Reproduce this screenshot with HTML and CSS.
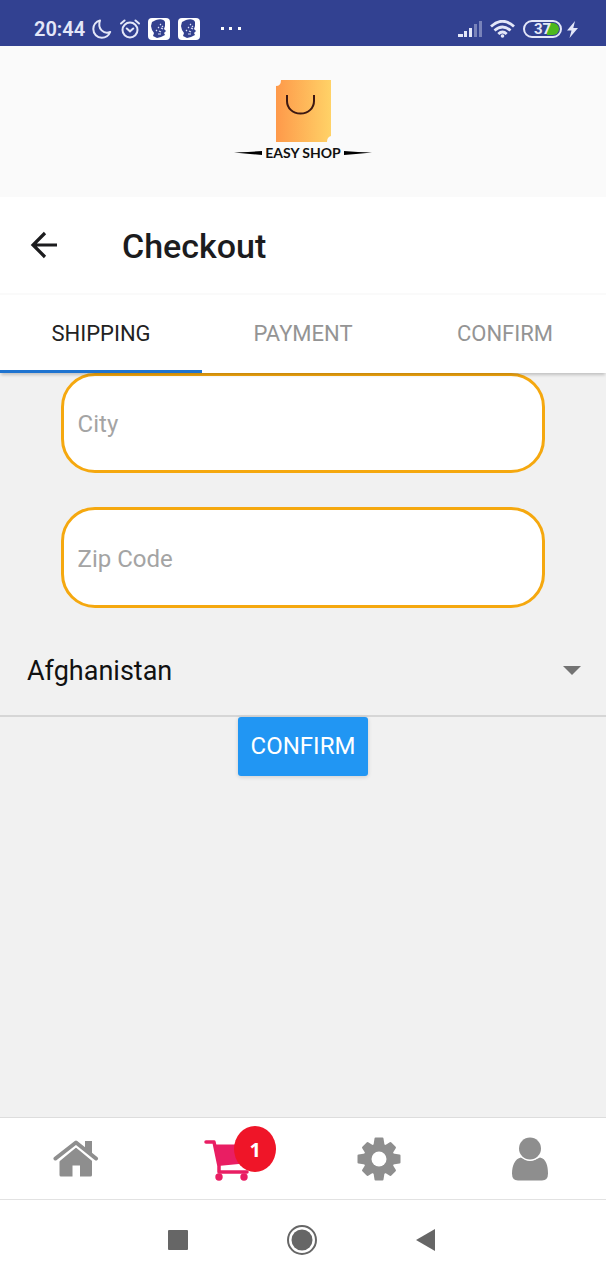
FILE: index.html
```html
<!DOCTYPE html>
<html lang="en">
<head>
<meta charset="utf-8">
<meta name="viewport" content="width=device-width, initial-scale=1">
<title>Easy Shop - Checkout</title>
<link rel="stylesheet" href="styles.css">
</head>
<body>
<div class="app">
  <div class="status">
    <span class="status-time">20:44</span>
    <svg width="20" height="20" viewBox="0 0 20 20" fill="none" stroke="currentColor" stroke-width="2" stroke-linejoin="round"><path d="M8 1.500C4 2.500 1.300 6 1.300 10c0 5 3.800 8.700 8.500 8.700 3.800 0 7-2.200 8.400-5.700C12 15.500 5 10 8 1.500z"/></svg>
    <svg width="20" height="20" viewBox="0 0 20 20" fill="none" stroke="currentColor" stroke-width="2" stroke-linecap="round"><circle cx="10" cy="11" r="7.500"/><path d="M1 4.500 4.500 1.500M19 4.500 15.500 1.500M6.800 9.500 10 12.300l3.200-2.800"/></svg>
    <svg width="22" height="22" viewBox="0 0 22 22"><rect width="22" height="22" rx="4" fill="#fff"/><path d="M8 2c4-1.500 8-1 9 2v4l-1 3 2 2-2 2 1 2-4 2-4 1-4-2 1-3-2-3-1-4 1-4z" fill="#34418f"/><path d="m12 6 1 1m-3 3 1-1m2 1 2 1m-4 2 2 1m1-6 1 1m-5 7h3m-5-4 1 1" stroke="#dfe3f8" stroke-width="1.200"/></svg>
    <svg width="22" height="22" viewBox="0 0 22 22"><rect width="22" height="22" rx="4" fill="#fff"/><path d="M8 2c4-1.500 8-1 9 2v4l-1 3 2 2-2 2 1 2-4 2-4 1-4-2 1-3-2-3-1-4 1-4z" fill="#34418f"/><path d="m12 6 1 1m-3 3 1-1m2 1 2 1m-4 2 2 1m1-6 1 1m-5 7h3m-5-4 1 1" stroke="#dfe3f8" stroke-width="1.200"/></svg>
    <svg class="dots" width="22" height="4" viewBox="0 0 22 4" fill="#fff"><path d="M1 0h3v3H1zM9 0h3v3H9zM18 0h3v3h-3z"/></svg>
    <div class="status-right">
      <svg width="24" height="18" viewBox="0 0 24 18" fill="currentColor"><path d="M0 14h5v3H0zM6 11h3v6H6zM11 8h3v9h-3z"/><path opacity=".4" d="M16 4h3v13h-3zM21 1h3v16h-3z"/></svg>
      <svg width="25" height="18" viewBox="0 0 25 18" fill="none" stroke="currentColor" stroke-width="2.800"><path d="M1 6.500q11.500-10.500 23 0M4.500 10.500q8-7 16 0M8.300 14q4.200-4 8.400 0"/><circle cx="12.500" cy="16" r="1.800" fill="currentColor" stroke="none"/></svg>
      <span class="battery">37</span>
      <svg class="bolt" width="11" height="17" viewBox="0 0 11 17" fill="currentColor"><path d="M8 0 0 9.500h4.500L2.500 17 11 7H6.300z"/></svg>
    </div>
  </div>

  <header class="brand">
    <svg width="56" height="63" viewBox="0 0 56 63">
      <defs><linearGradient id="bag" x1="0" x2="1"><stop offset="0" stop-color="#fe994a"/><stop offset="1" stop-color="#ffd267"/></linearGradient></defs>
      <path d="M6 0h50v56q-4 1-4 6H1V6q5 0 5-6z" fill="url(#bag)"/>
      <path d="M12 15v6c0 7 5.500 12.500 13.500 12.500S39 28 39 21v-6" fill="none" stroke="#3d1812" stroke-width="2"/>
    </svg>
    <div class="brand-name">
      <svg width="28" height="6" viewBox="0 0 28 6"><path d="M0 2.500 14 2l14-1v4l-12-1z"/></svg>
      <span>EASY SHOP</span>
      <svg width="28" height="6" viewBox="0 0 28 6"><path d="M28 2.500 14 2 0 1v4l12-1z"/></svg>
    </div>
  </header>

  <div class="title-bar">
    <button class="back" type="button" aria-label="Back"><svg width="28" height="28" viewBox="0 0 28 28" fill="none" stroke="currentColor" stroke-width="3.200"><path d="M27 14H3M15 2 3 14l12 12"/></svg></button>
    <h1>Checkout</h1>
  </div>

  <nav class="tabs">
    <button class="tab tab-active" type="button">SHIPPING</button>
    <button class="tab" type="button">PAYMENT</button>
    <button class="tab" type="button">CONFIRM</button>
  </nav>

  <main class="content">
    <form class="form">
      <input class="field" type="text" placeholder="City" aria-label="City">
      <input class="field" type="text" placeholder="Zip Code" aria-label="Zip Code">
      <div class="country">
        <select aria-label="Country"><option>Afghanistan</option></select>
        <svg width="18" height="9" viewBox="0 0 18 9"><path d="M0 0h18L9 9z" fill="#737373"/></svg>
      </div>
      <button class="confirm" type="button">CONFIRM</button>
    </form>
  </main>

  <nav class="bottom-nav">
    <a href="#home" aria-label="Home"><svg width="46" height="44" viewBox="0 0 46 44" fill="#8e8e8e"><path d="M23 10 39 22v16q0 1.500-1.500 1.500H27V28.500h-7.500v11H8q-1.500 0-1.500-1.500V22z"/><path d="M2.500 23 23 6l20.500 17" fill="none" stroke="#fff" stroke-width="7"/><path d="M32 4h7v15l-7-6z"/><path d="M2.500 21.500 23 5.500 43 21.500" fill="none" stroke="#8e8e8e" stroke-width="4" stroke-linecap="round" stroke-linejoin="round"/></svg></a>
    <a href="#cart" class="cart" aria-label="Cart, 1 item"><svg width="46" height="44" viewBox="0 0 46 44" fill="#e91e63"><path d="M2 5h8l5 24v6h28" fill="none" stroke="#e91e63" stroke-width="3.500" stroke-linejoin="round" stroke-linecap="round"/><path d="M10 7.500h34l-4 19L14 29z"/><circle cx="15" cy="40" r="3.700"/><circle cx="40" cy="40" r="3.700"/></svg><span class="badge">1</span></a>
    <a href="#settings" aria-label="Settings"><svg width="44" height="44" viewBox="0 0 44 44"><g fill="#8e8e8e"><circle cx="22" cy="22" r="15.500"/><path id="tooth" d="M18.500.5h7q.9 0 1 1L27.500 8v28l-1 6.500q-.1 1-1 1h-7q-.9 0-1-1L16.500 36V8l1-6.500q.1-1 1-1z"/><use href="#tooth" transform="rotate(90 22 22)"/><path id="diag" d="M19 1.500h6q1 0 1.200 1L27.500 8v28l-1.300 5.500q-.2 1-1.200 1h-6q-1 0-1.200-1L16.500 36V8l1.300-5.500q.2-1 1.200-1z" transform="rotate(45 22 22)"/><use href="#diag" transform="rotate(90 22 22)"/></g><circle cx="22" cy="22" r="7.500" fill="#fff"/></svg></a>
    <a href="#profile" aria-label="Profile"><svg width="38" height="44" viewBox="0 0 38 44" fill="#8e8e8e"><path d="M10 20.500q9 6 19 0c6 1 8 8 8 16q0 7-6 7H7q-6 0-6-7c0-8 3-15 9-16z"/><circle cx="19" cy="11.500" r="12.500" fill="#fff"/><circle cx="19" cy="11.500" r="11"/></svg></a>
  </nav>

  <div class="system-nav">
    <button type="button" aria-label="Recent apps"><svg width="20" height="20" viewBox="0 0 20 20"><rect width="20" height="20" rx="1" fill="#666"/></svg></button>
    <button type="button" aria-label="Home screen"><svg width="30" height="30" viewBox="0 0 30 30"><circle cx="15" cy="15" r="14" fill="none" stroke="#666" stroke-width="2"/><circle cx="15" cy="15" r="10.500" fill="#666"/></svg></button>
    <button type="button" aria-label="System back"><svg width="20" height="22" viewBox="0 0 20 22"><path d="M19 0v22L0 11z" fill="#666"/></svg></button>
  </div>
</div>
</body>
</html>
```

FILE: styles.css
```css
* { box-sizing: border-box; }

body {
  margin: 0;
  font-family: Roboto, "Noto Sans", sans-serif;
  background: #fff;
}

svg { display: block; flex: none; }

button {
  padding: 0;
  border: 0;
  background: none;
  font: inherit;
  color: inherit;
}

.app {
  display: flex;
  flex-direction: column;
  min-height: 100vh;
}

.status {
  display: flex;
  align-items: center;
  gap: 8px;
  height: 46px;
  padding: 12px 28px 0 34px;
  background: #324191;
  color: #e4e7f8;
}

.status-time {
  width: 50px;
  font-size: 20px;
  line-height: 24px;
  font-weight: 600;
}

.dots { margin-left: 12px; }

.status-right {
  display: flex;
  align-items: center;
  gap: 8px;
  margin-left: auto;
}

.battery {
  width: 39px;
  height: 18px;
  padding: 1px;
  border: 2px solid #e4e7f8;
  border-radius: 9px;
  background: linear-gradient(90deg, transparent 65%, #4cb81e 65%) content-box;
  font-size: 15px;
  line-height: 12px;
  font-weight: 700;
  text-align: center;
}

.bolt { margin-left: -3px; }

.brand {
  display: flex;
  flex-direction: column;
  align-items: center;
  gap: 2px;
  padding: 34px 0 36px;
  background: #fafafa;
}

.brand-name {
  display: flex;
  align-items: center;
  gap: 3px;
  font: 700 14px/16px Lato, sans-serif;
  color: #111;
}

.title-bar {
  display: flex;
  align-items: center;
  gap: 64px;
  height: 98px;
  padding: 0 30px;
  border-bottom: 2px solid #fafafa;
  color: #1c1c1e;
}

.title-bar h1 {
  margin: 0;
  padding-top: 2px;
  font-size: 34px;
  line-height: 40px;
  font-weight: 500;
}

.tabs {
  display: grid;
  grid-template-columns: repeat(3, 1fr);
  position: relative;
  height: 78px;
  background: #fff;
  box-shadow: 0 3px 3px -1px rgba(0, 0, 0, .2);
}

.tab {
  padding-top: 2px;
  border-bottom: 3px solid transparent;
  font-size: 22px;
  color: #949494;
}

.tab-active { border-bottom-color: #1f74d0; color: #222; }

.content { flex: 1; background: #f1f1f1; }

.form {
  display: flex;
  flex-direction: column;
  align-items: center;
}

.field {
  width: 80%;
  height: 101px;
  margin-bottom: 34px;
  padding: 2px 14px 0;
  border: 3px solid #f5a80f;
  border-radius: 34px;
  background: #fff;
  font: 24px/28px Roboto, sans-serif;
  color: #222;
}

.field:first-child { height: 100px; }
.field:nth-child(2) { margin-bottom: 18px; }
.field::placeholder { color: #a4a4a4; opacity: 1; }

.country {
  display: flex;
  align-items: center;
  align-self: stretch;
  height: 91px;
  padding: 0 25px 0 27px;
  border-bottom: 2px solid #d6d6d6;
}

.country select {
  flex: 1;
  height: 60px;
  margin-right: -18px;
  padding: 0;
  border: 0;
  appearance: none;
  background: transparent;
  font: 27px/32px Roboto, sans-serif;
  color: #111;
}

.country svg { pointer-events: none; }

.confirm {
  padding: 15px 13px;
  border-radius: 3px;
  background: #2196f3;
  box-shadow: 0 1px 4px rgba(0, 0, 0, .15);
  font-size: 24px;
  line-height: 29px;
  color: #fff;
}

.bottom-nav {
  display: grid;
  grid-template-columns: repeat(4, 1fr);
  place-items: center;
  height: 83px;
  border-top: 1px solid #ddd;
  border-bottom: 1px solid #e2e2e2;
}

.cart { position: relative; }

.badge {
  position: absolute;
  top: -11px;
  left: 30px;
  width: 42px;
  height: 46px;
  border-radius: 50%;
  background: #ef1528;
  font: 700 20px/48px "Open Sans", sans-serif;
  color: #fff;
  text-align: center;
}

.system-nav {
  display: flex;
  align-items: center;
  justify-content: center;
  gap: 99px;
  height: 80px;
  padding-right: 2px;
}
```
